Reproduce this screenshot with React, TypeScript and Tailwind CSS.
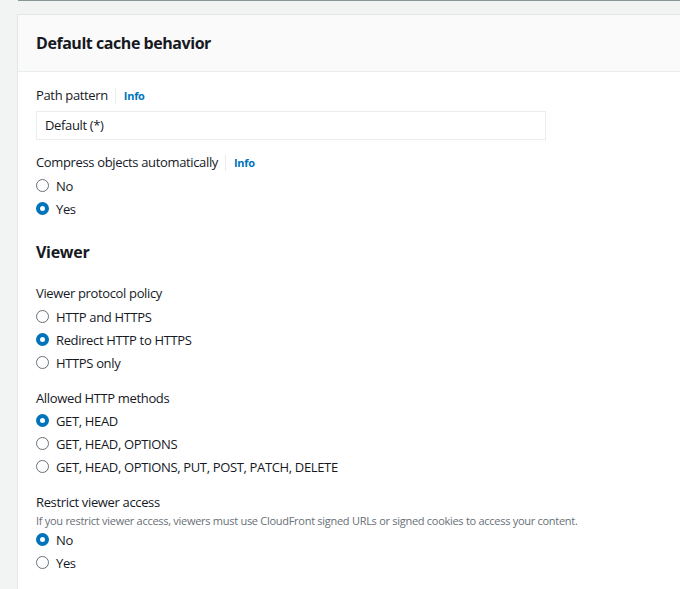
import React from "react";

const font = { fontFamily: '"Open Sans", "Noto Sans", Arial, sans-serif' };

function Radio({ checked, label }: { checked?: boolean; label: string }) {
  return (
    <div className="flex items-center h-[23px]">
      {checked ? (
        <span className="w-[13px] h-[13px] rounded-full border-[4px] border-[#0073bb] bg-white box-border" />
      ) : (
        <span className="w-[13px] h-[13px] rounded-full border border-[#687078] bg-white box-border" />
      )}
      <span className="ml-[7px] text-[13px] leading-[20px] tracking-[-0.35px] text-[#16191f]">{label}</span>
    </div>
  );
}

function Label({ text, info }: { text: string; info?: boolean }) {
  return (
    <div className="flex items-center h-[20px] text-[13px] tracking-[-0.35px] text-[#16191f]">
      <span>{text}</span>
      {info && (
        <>
          <span className="ml-[7px] w-px h-[16px] bg-[#eaeded]" />
          <span className="ml-[8px] text-[11px] font-bold text-[#0073bb] tracking-[-0.3px]">Info</span>
        </>
      )}
    </div>
  );
}

export default function App() {
  return (
    <div className="w-[680px] h-[589px] bg-[#f2f3f3] overflow-hidden" style={font}>
      <div className="ml-[18px] h-px bg-[#879596]" />
      <div className="ml-[17px] mt-[13px] w-[700px] bg-white border-l border-t border-[#e3e6e6]">
        <div className="h-[57px] bg-[#fafafa] border-b border-[#eaeded] flex items-center pl-[18px]">
          <h2 className="text-[16px] font-bold text-[#16191f] tracking-[-0.45px]">Default cache behavior</h2>
        </div>
        <div className="pl-[18px] pt-[14px] pb-[20px]">
          <Label text="Path pattern" info />
          <div className="mt-[5px] w-[510px] h-[29px] border border-[#eaeded] flex items-center pl-[8px] text-[13px] tracking-[-0.35px] text-[#16191f]">
            Default (*)
          </div>
          <div className="mt-[13px]">
            <Label text="Compress objects automatically" info />
          </div>
          <div className="pt-[1px]">
            <Radio label="No" />
            <Radio checked label="Yes" />
          </div>
          <div className="mt-[20px] h-[24px] flex items-center text-[16px] font-bold tracking-[-0.3px] text-[#16191f]">Viewer</div>
          <div className="mt-[20px]">
            <Label text="Viewer protocol policy" />
          </div>
          <div className="pt-[1px]">
            <Radio label="HTTP and HTTPS" />
            <Radio checked label="Redirect HTTP to HTTPS" />
            <Radio label="HTTPS only" />
          </div>
          <div className="mt-[15px]">
            <Label text="Allowed HTTP methods" />
          </div>
          <div>
            <Radio checked label="GET, HEAD" />
            <Radio label="GET, HEAD, OPTIONS" />
            <Radio label="GET, HEAD, OPTIONS, PUT, POST, PATCH, DELETE" />
          </div>
          <div className="mt-[15px]">
            <Label text="Restrict viewer access" />
          </div>
          <div className="h-[16px] flex items-center text-[11px] tracking-[-0.28px] text-[#687078]">
            If you restrict viewer access, viewers must use CloudFront signed URLs or signed cookies to access your content.
          </div>
          <div className="-mt-px">
            <Radio checked label="No" />
            <Radio label="Yes" />
          </div>
        </div>
      </div>
    </div>
  );
}
